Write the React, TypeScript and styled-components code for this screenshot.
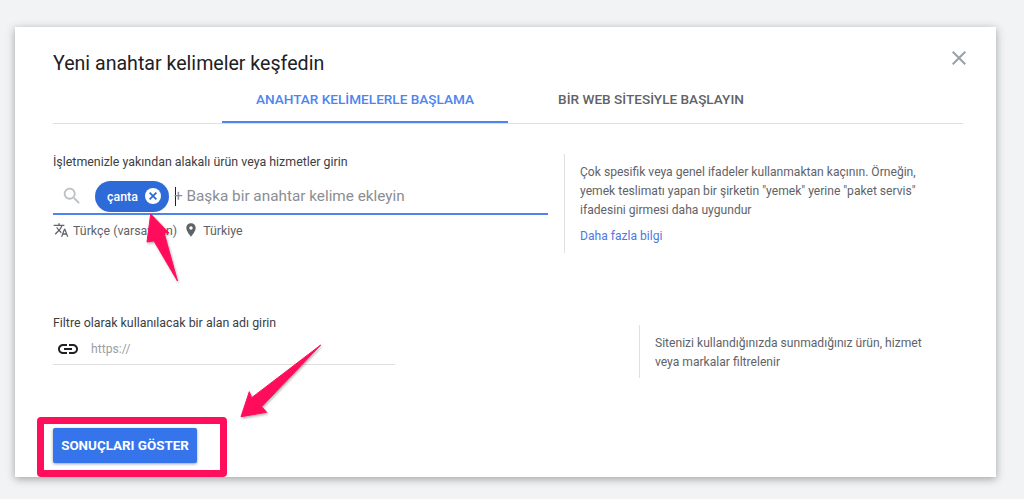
import styled, { createGlobalStyle } from "styled-components";

const GlobalStyle = createGlobalStyle`
  html, body {
    margin: 0;
    padding: 0;
    background: #f1f3f4;
  }

  * {
    box-sizing: border-box;
  }
`;

const ICONS = {
  search: "M15.5 14h-.79l-.28-.27C15.41 12.59 16 11.11 16 9.5 16 5.91 13.09 3 9.5 3S3 5.91 3 9.5 5.91 16 9.5 16c1.61 0 3.09-.59 4.23-1.57l.27.28v.79l5 4.99L20.49 19l-4.99-5zm-6 0C7.01 14 5 11.99 5 9.5S7.01 5 9.5 5 14 7.01 14 9.5 11.99 14 9.5 14z",
  translate: "M12.87 15.07l-2.54-2.51.03-.03c1.74-1.94 2.98-4.17 3.71-6.53H17V4h-7V2H8v2H1v1.99h11.17C11.5 7.92 10.44 9.75 9 11.35 8.07 10.32 7.3 9.19 6.69 8h-2c.73 1.63 1.73 3.17 2.98 4.56l-5.09 5.02L4 19l5-5 3.11 3.11.76-2.04zM18.5 10h-2L12 22h2l1.12-3h4.75L21 22h2l-4.5-12zm-2.62 7l1.62-4.33L19.12 17h-3.24z",
  place: "M12 2C8.13 2 5 5.13 5 9c0 5.25 7 13 7 13s7-7.75 7-13c0-3.87-3.13-7-7-7zm0 9.5c-1.38 0-2.5-1.12-2.5-2.5s1.12-2.5 2.5-2.5 2.5 1.12 2.5 2.5-1.12 2.5-2.5 2.5z",
  link: "M3.9 12c0-1.71 1.39-3.1 3.1-3.1h4V7H7c-2.76 0-5 2.24-5 5s2.24 5 5 5h4v-1.9H7c-1.71 0-3.1-1.39-3.1-3.1zM8 13h8v-2H8v2zm9-6h-4v1.9h4c1.71 0 3.1 1.39 3.1 3.1s-1.39 3.1-3.1 3.1h-4V17h4c2.76 0 5-2.24 5-5s-2.24-5-5-5z",
  close: "M19 6.41L17.59 5 12 10.59 6.41 5 5 6.41 10.59 12 5 17.59 6.41 19 12 13.41 17.59 19 19 17.59 13.41 12z",
};

const Icon = ({ name, size, color }: { name: keyof typeof ICONS; size: number; color: string }) => (
  <IconSvg viewBox="0 0 24 24" width={size} height={size} fill={color}>
    <path d={ICONS[name]} />
  </IconSvg>
);

const App = () => {
  return (
    <Page>
      <GlobalStyle />
      <Card>
        <Header>
          <Title>Yeni anahtar kelimeler keşfedin</Title>
          <CloseButton>
            <Icon name="close" size={24} color="#9aa0a6" />
          </CloseButton>
        </Header>

        <Tabs>
          <Tab active>ANAHTAR KELİMELERLE BAŞLAMA</Tab>
          <Tab>BİR WEB SİTESİYLE BAŞLAYIN</Tab>
        </Tabs>

        <KeywordSection>
          <KeywordColumn>
            <Label>İşletmenizle yakından alakalı ürün veya hizmetler girin</Label>
            <KeywordInput>
              <SearchSlot>
                <Icon name="search" size={22} color="#bdc1c6" />
              </SearchSlot>
              <Chip>
                çanta
                <ChipClose>
                  <svg viewBox="0 0 16 16" width="12" height="12">
                    <path d="M3.5 3.5l9 9M12.5 3.5l-9 9" stroke="#2f6bd8" strokeWidth="2.4" />
                  </svg>
                </ChipClose>
              </Chip>
              <Caret />
              <Placeholder>+ Başka bir anahtar kelime ekleyin</Placeholder>
            </KeywordInput>
            <MetaRow>
              <MetaItem>
                <Icon name="translate" size={16} color="#5f6368" />
                Türkçe (varsayılan)
              </MetaItem>
              <MetaItem>
                <Icon name="place" size={16} color="#5f6368" />
                Türkiye
              </MetaItem>
            </MetaRow>
          </KeywordColumn>
          <Note height={99}>
            <NoteText>
              Çok spesifik veya genel ifadeler kullanmaktan kaçının. Örneğin,
              <br />
              yemek teslimatı yapan bir şirketin "yemek" yerine "paket servis"
              <br />
              ifadesini girmesi daha uygundur
            </NoteText>
            <NoteLink>Daha fazla bilgi</NoteLink>
          </Note>
        </KeywordSection>

        <DomainSection>
          <DomainColumn>
            <Label>Filtre olarak kullanılacak bir alan adı girin</Label>
            <DomainInput>
              <Icon name="link" size={24} color="#202124" />
              <DomainPlaceholder>https://</DomainPlaceholder>
            </DomainInput>
          </DomainColumn>
          <DomainNote height={53}>
            <NoteText>
              Sitenizi kullandığınızda sunmadığınız ürün, hizmet
              <br />
              veya markalar filtrelenir
            </NoteText>
          </DomainNote>
        </DomainSection>

        <Footer>
          <ButtonFrame>
            <SubmitButton>SONUÇLARI GÖSTER</SubmitButton>
            <Highlight />
          </ButtonFrame>
        </Footer>
      </Card>

      <Arrows viewBox="0 0 1024 499" width="1024" height="499">
        <defs>
          <filter id="arrowShadow" x="-20%" y="-20%" width="140%" height="140%">
            <feDropShadow dx="1" dy="1.5" stdDeviation="1.2" floodColor="#000" floodOpacity="0.3" />
          </filter>
        </defs>
        <g fill="#ff0f5b" stroke="#ff0f5b" strokeWidth="1" strokeLinejoin="round" filter="url(#arrowShadow)">
          <path d="M150.7 214L169 233L164 232.5L177.5 281L154 241L147 242Z" />
          <path d="M320.7 345L261.7 406.7L266.7 412.3L241 416.7L249.3 391.7L251.7 397.7Z" />
        </g>
      </Arrows>
    </Page>
  );
};

const Page = styled.div`
  position: relative;
  width: 1024px;
  height: 499px;
  padding: 27px 28px 0 15px;
  overflow: hidden;
  font-family: Roboto, "Liberation Sans", sans-serif;
`;

const IconSvg = styled.svg`
  display: block;
  flex: none;
`;

const Card = styled.div`
  width: 981px;
  height: 450px;
  padding: 25px 33px 0 38px;
  background: #ffffff;
  box-shadow: 0 2px 8px rgba(60, 64, 67, 0.45);
`;

const Header = styled.div`
  display: flex;
  justify-content: space-between;
  align-items: flex-start;
`;

const Title = styled.h1`
  margin: 0;
  font-size: 19.6px;
  font-weight: 400;
  line-height: 24px;
  color: #202124;
`;

const CloseButton = styled.div`
  margin: -6px -8px 0 0;
`;

const Tabs = styled.div`
  display: flex;
  justify-content: center;
  height: 48px;
  border-bottom: 1px solid #e0e0e0;
`;

const Tab = styled.div<{ active?: boolean }>`
  width: 286px;
  height: 47px;
  padding-top: 1px;
  display: flex;
  align-items: center;
  justify-content: center;
  font-size: 13.6px;
  font-weight: 500;
  color: ${(p) => (p.active ? "#4d85f0" : "#5f6368")};
  border-bottom: 2px solid ${(p) => (p.active ? "#4d85f0" : "transparent")};
`;

const KeywordSection = styled.section`
  display: flex;
  margin-top: 30px;
`;

const KeywordColumn = styled.div`
  width: 495px;
`;

const Label = styled.div`
  font-size: 12.4px;
  line-height: 16px;
  color: #3c4043;
`;

const KeywordInput = styled.div`
  display: flex;
  align-items: center;
  height: 45px;
  padding-top: 9px;
  border-bottom: 2px solid #4d85f0;
`;

const SearchSlot = styled.div`
  width: 42px;
  padding-left: 8px;
`;

const Chip = styled.div`
  display: flex;
  align-items: center;
  justify-content: space-between;
  width: 74px;
  height: 31px;
  padding: 0 8px 0 12px;
  border-radius: 16px;
  background: #2f6bd8;
  color: #ffffff;
  font-size: 12.4px;
  font-weight: 500;
`;

const ChipClose = styled.span`
  display: flex;
  align-items: center;
  justify-content: center;
  width: 16px;
  height: 16px;
  border-radius: 50%;
  background: #ffffff;
`;

const Caret = styled.span`
  width: 1px;
  height: 19px;
  margin-left: 6px;
  background: #202124;
`;

const Placeholder = styled.span`
  margin-left: -2px;
  font-size: 15.3px;
  color: #8a8e93;
`;

const MetaRow = styled.div`
  display: flex;
  align-items: center;
  gap: 6px;
  height: 30px;
`;

const MetaItem = styled.div`
  display: flex;
  align-items: center;
  gap: 4px;
  font-size: 12.4px;
  color: #5f6368;
`;

const Note = styled.aside<{ height: number }>`
  height: ${(p) => p.height}px;
  margin-left: 16px;
  padding: 9px 0 0 15px;
  border-left: 1px solid #e0e0e0;
`;

const NoteText = styled.p`
  margin: 0;
  font-size: 12.1px;
  line-height: 19px;
  color: #5f6368;
`;

const NoteLink = styled.div`
  margin-top: 7px;
  font-size: 12.1px;
  line-height: 19px;
  color: #4d79e0;
`;

const DomainSection = styled.section`
  display: flex;
  margin-top: 62px;
`;

const DomainColumn = styled.div`
  width: 342px;
`;

const DomainInput = styled.div`
  display: flex;
  align-items: center;
  height: 34px;
  padding: 3px 0 0 3px;
  border-bottom: 1px solid #e0e0e0;
`;

const DomainPlaceholder = styled.span`
  margin-left: 11px;
  font-size: 12.2px;
  color: #9aa0a6;
`;

const DomainNote = styled(Note)`
  margin: 10px 0 0 244px;
`;

const Footer = styled.div`
  margin-top: 50px;
`;

const ButtonFrame = styled.div`
  position: relative;
  display: inline-block;
`;

const SubmitButton = styled.button`
  display: block;
  width: 144px;
  height: 35px;
  padding: 0;
  border: 0;
  border-radius: 2px;
  background: #3574ea;
  color: #ffffff;
  font-family: inherit;
  font-size: 13.4px;
  font-weight: 700;
  box-shadow: 0 1px 3px rgba(60, 64, 67, 0.5);
`;

const Highlight = styled.div`
  position: absolute;
  top: -11px;
  left: -16px;
  width: 190px;
  height: 60px;
  border: 7px solid #ff0f5b;
  border-radius: 4px;
`;

const Arrows = styled.svg`
  position: absolute;
  top: 0;
  left: 0;
  pointer-events: none;
`;

export default App;
